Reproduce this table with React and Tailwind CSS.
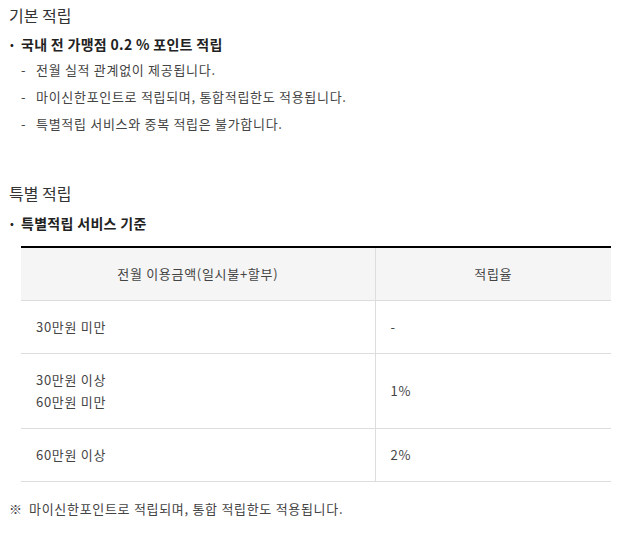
import React from "react";

const font = { fontFamily: '"Noto Sans CJK KR", "Noto Sans", sans-serif' };

const basicNotes = [
  "전월 실적 관계없이 제공됩니다.",
  "마이신한포인트로 적립되며, 통합적립한도 적용됩니다.",
  "특별적립 서비스와 중복 적립은 불가합니다.",
];

const rows = [
  { amount: ["30만원 미만"], rate: "-" },
  { amount: ["30만원 이상", "60만원 미만"], rate: "1%" },
  { amount: ["60만원 이상"], rate: "2%" },
];

const Bullet = ({ children, className = "" }) => (
  <div className={`flex items-center text-[14px] leading-[22px] text-[#222] font-bold tracking-[0.3px] ${className}`}>
    <span className="w-[12px] pl-[1px] text-[10px]">•</span>
    <span>{children}</span>
  </div>
);

const App = () => {
  return (
    <div className="w-[620px] min-h-[535px] bg-white pl-[9px] text-[#333]" style={font}>
      {/* 기본 적립 */}
      <h2 className="text-[16px] leading-[30px] font-normal text-[#333]">기본 적립</h2>
      <Bullet className="mt-[3px]">국내 전 가맹점 0.2 % 포인트 적립</Bullet>
      <ul className="mt-[1px] pl-[12px]">
        {basicNotes.map((note) => (
          <li key={note} className="flex text-[13px] leading-[27px] text-[#444] tracking-[0.7px]">
            <span className="w-[15px]">-</span>
            <span>{note}</span>
          </li>
        ))}
      </ul>

      {/* 특별 적립 */}
      <h2 className="mt-[41px] text-[16px] leading-[30px] font-normal text-[#333]">특별 적립</h2>
      <Bullet className="mt-[4px]">특별적립 서비스 기준</Bullet>

      <table className="mt-[12px] ml-[12px] w-[590px] border-collapse border-t-2 border-t-black text-[13px] leading-[22px] text-[#444] tracking-[0.7px]">
        <thead>
          <tr className="bg-[#f5f5f5]">
            <th className="w-[354px] h-[53px] border-b border-r border-[#ddd] font-normal text-center">
              전월 이용금액(일시불+할부)
            </th>
            <th className="h-[53px] border-b border-[#ddd] font-normal text-center">적립율</th>
          </tr>
        </thead>
        <tbody>
          {rows.map((row) => (
            <tr key={row.rate}>
              <td className="py-[15px] pl-[15px] border-b border-r border-[#ddd]">
                {row.amount.map((a) => (
                  <div key={a}>{a}</div>
                ))}
              </td>
              <td className="py-[15px] pl-[15px] border-b border-[#ddd]">{row.rate}</td>
            </tr>
          ))}
        </tbody>
      </table>

      <p className="mt-[16px] flex text-[13px] leading-[22px] text-[#444] tracking-[0.7px]">
        <span className="w-[20px]">※</span>
        <span>마이신한포인트로 적립되며, 통합 적립한도 적용됩니다.</span>
      </p>
    </div>
  );
};

export default App;
